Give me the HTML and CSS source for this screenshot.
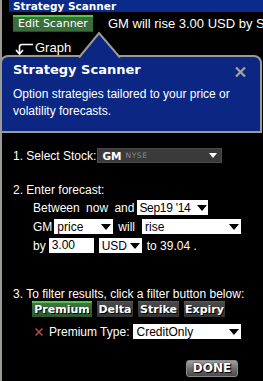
FILE: index.html
```html
<!DOCTYPE html>
<html>
<head>
<meta charset="utf-8">
<title>Strategy Scanner</title>
<link rel="stylesheet" href="styles.css">
</head>
<body>
<div class="app">
  <div class="titlebar">Strategy Scanner</div>
  <div class="toolbar">
    <div class="btn-edit">Edit Scanner</div>
    <div class="summary">GM will rise 3.00 USD by Sep19 '14</div>
  </div>
  <div class="graph">
    <svg class="graph-icon" width="19" height="12" viewBox="0 0 19 12"><path d="M19 1.5 H8 Q5.5 1.5 5.5 4 V10" fill="none" stroke="#fff" stroke-width="1.6"/><path d="M2 7 L5.5 11 L9 7" fill="none" stroke="#fff" stroke-width="1.6"/></svg>
    <span>Graph</span>
  </div>

  <div class="popup">
    <div class="pop-head">
      <div class="pop-title-row">
        <span class="pop-title">Strategy Scanner</span>
        <svg class="close" width="11" height="10" viewBox="0 0 11 10"><path d="M1 0.5 L10 9.5 M10 0.5 L1 9.5" stroke="#a6a595" stroke-width="2.2"/></svg>
      </div>
      <p class="pop-desc">Option strategies tailored to your price or volatility forecasts.</p>
    </div>
    <div class="pop-body">
      <div class="row row-stock">
        <span>1. Select Stock:</span>
        <div class="stock-select"><b>GM</b><span class="exch">NYSE</span><i class="arrow arrow-white"></i></div>
      </div>
      <div class="step">2. Enter forecast:</div>
      <div class="row indent row-between">
        <span class="wide">Between now and</span>
        <div class="sel sel-date"><span class="tight">Sep19 '14</span><i class="arrow"></i></div>
      </div>
      <div class="row indent row-gm">
        <span>GM</span>
        <div class="sel sel-price"><span>price</span><i class="arrow"></i></div>
        <span class="will">will</span>
        <div class="sel sel-rise"><span>rise</span><i class="arrow"></i></div>
      </div>
      <div class="row indent row-by">
        <span>by</span>
        <div class="input-box">3.00</div>
        <div class="sel sel-usd"><span>USD</span><i class="arrow"></i></div>
        <span class="target">to 39.04 .</span>
      </div>
      <div class="step step3">3. To filter results, click a filter button below:</div>
      <div class="filters">
        <div class="fbtn fbtn-on w-prem">Premium</div>
        <div class="fbtn w-delta">Delta</div>
        <div class="fbtn w-strike">Strike</div>
        <div class="fbtn w-exp">Expiry</div>
      </div>
      <div class="row row-ptype">
        <svg class="remove" width="8" height="8" viewBox="0 0 8 8"><path d="M0.5 0.5 L7.5 7.5 M7.5 0.5 L0.5 7.5" stroke="#b84a4a" stroke-width="1.5"/></svg>
        <span class="ptype-label">Premium Type:</span>
        <div class="sel sel-credit"><span>CreditOnly</span><i class="arrow"></i></div>
      </div>
      <div class="done-row"><div class="btn-done">DONE</div></div>
    </div>
  </div>

  <svg class="pointer" width="48" height="28" viewBox="0 0 48 28">
    <polygon points="3,28 23,2 44,28" fill="#0b2783"/>
    <polyline points="3,26.5 23,2 44,26.5" fill="none" stroke="#9b9b93" stroke-width="2"/>
  </svg>
</div>
</body>
</html>
```

FILE: styles.css
```css
body {
  margin: 0;
  background: #000;
}

.app {
  position: relative;
  width: 263px;
  height: 381px;
  overflow: hidden;
  background: #000;
  box-shadow: inset 2px 0 0 #9b9b93;
  font-family: "Liberation Sans", Arial, sans-serif;
  font-size: 12px;
  color: #fff;
}

.titlebar {
  margin-left: 9px;
  height: 12px;
  padding-left: 4px;
  background: #0a2a8c;
  font-family: "DejaVu Sans", Verdana, sans-serif;
  font-weight: bold;
  font-size: 10.5px;
  line-height: 12px;
  white-space: nowrap;
}

.toolbar {
  display: flex;
  align-items: center;
  margin: 3px 0 0 13px;
  height: 17px;
  white-space: nowrap;
}

.btn-edit {
  box-sizing: border-box;
  flex: none;
  width: 80px;
  height: 17px;
  border-top: 2px solid #55c455;
  background: #3b6d3b;
  box-shadow: inset 0 -1px 0 #2a4a2a;
  font-family: "DejaVu Sans", Verdana, sans-serif;
  font-size: 11px;
  line-height: 14px;
  text-align: center;
}

.summary {
  margin-left: 15px;
  font-size: 13px;
}

.graph {
  display: flex;
  align-items: center;
  margin: 8px 0 0 14px;
  height: 15px;
  font-size: 13px;
}

.graph-icon {
  margin-right: 2px;
  margin-top: 2px;
}

.popup {
  position: absolute;
  left: 0;
  top: 55px;
  width: 262px;
  bottom: 0;
  box-sizing: border-box;
  border: 2px solid #9b9b93;
  border-right-color: transparent;
  border-bottom: none;
  border-radius: 8px 8px 0 0;
  background: linear-gradient(to bottom, #9b9b93 0, #9b9b93 76px, #000 76px);
  background-clip: border-box;
  overflow: hidden;
}

.pop-head {
  height: 74px;
  box-sizing: border-box;
  padding: 5px 0 0 11px;
  background: #0b2783;
}

.pop-title-row {
  display: flex;
  align-items: center;
  justify-content: space-between;
  padding-right: 14px;
  height: 16px;
}

.pop-title {
  font-family: "DejaVu Sans", Verdana, sans-serif;
  font-weight: bold;
  font-size: 13px;
  line-height: 16px;
}

.close {
  margin-top: 3px;
}

.pop-desc {
  margin: 8px 0 0 0;
  font-size: 12px;
  line-height: 17px;
  width: 230px;
}

.pop-body {
  padding-left: 11px;
  background: #000;
  height: calc(100% - 74px);
}

.row {
  display: flex;
  align-items: center;
  height: 15px;
  white-space: nowrap;
}

.indent {
  padding-left: 20px;
}

.row-stock {
  margin-top: 17px;
}

.stock-select {
  display: flex;
  align-items: center;
  box-sizing: border-box;
  width: 125px;
  height: 15px;
  margin-left: 1px;
  padding-left: 4px;
  background: #3a3a3a;
  border: 1px solid #4a4a4a;
}

.stock-select b {
  font-family: "DejaVu Sans", Verdana, sans-serif;
  font-size: 10.5px;
}

.exch {
  margin-left: 4px;
  font-family: "DejaVu Sans", Verdana, sans-serif;
  font-size: 7.5px;
  letter-spacing: 0.6px;
  color: #8a8a8a;
}

.step {
  margin-top: 19px;
  line-height: 16px;
}

.row-between {
  margin-top: 2px;
}

.wide {
  word-spacing: 3px;
}

.tight {
  letter-spacing: -0.3px;
}

.row-gm,
.row-by {
  margin-top: 4px;
}

.sel {
  display: flex;
  align-items: center;
  justify-content: space-between;
  box-sizing: border-box;
  height: 15px;
  padding: 0 2px 0 3px;
  background: #fff;
  color: #000;
}

.arrow {
  display: block;
  flex: none;
  width: 0;
  height: 0;
  border-left: 5px solid transparent;
  border-right: 5px solid transparent;
  border-top: 6px solid #000;
}

.arrow-white {
  margin-left: auto;
  margin-right: 4px;
  border-left-width: 4px;
  border-right-width: 4px;
  border-top: 5px solid #fff;
}

.sel-date { width: 71px; margin-left: 3px; padding-left: 2px; padding-right: 1px; }
.sel-price { width: 59px; margin-left: 2px; }
.will { margin-left: 5px; }
.sel-rise { width: 99px; margin-left: 7px; }
.sel-usd { width: 43px; margin-left: 5px; }
.target { margin-left: 5px; }

.input-box {
  box-sizing: border-box;
  width: 45px;
  height: 15px;
  margin-left: 3px;
  padding-left: 3px;
  background: #fff;
  color: #000;
  line-height: 15px;
}

.step3 {
  margin-top: 34px;
  line-height: 14px;
}

.filters {
  display: flex;
  gap: 5px;
  padding-left: 19px;
  height: 16px;
}

.fbtn {
  box-sizing: border-box;
  height: 16px;
  border-top: 1px solid #5a5a5a;
  background: linear-gradient(to bottom, #4a4a4a, #333);
  font-family: "DejaVu Sans", Verdana, sans-serif;
  font-weight: bold;
  font-size: 11px;
  line-height: 15px;
  text-align: center;
  text-shadow: 1px 1px 0 #000;
}

.fbtn-on {
  border-top: 2px solid #4fc24f;
  background: linear-gradient(to bottom, #3f743f, #2c572c);
  line-height: 14px;
}

.w-prem { width: 60px; }
.w-delta { width: 36px; }
.w-strike { width: 41px; }
.w-exp { width: 41px; }

.row-ptype {
  margin-top: 7px;
  padding-left: 22px;
}

.ptype-label {
  margin-left: 6px;
}

.sel-credit {
  width: 108px;
  margin-left: 4px;
}

.done-row {
  display: flex;
  justify-content: flex-end;
  margin-top: 21px;
  padding-right: 22px;
}

.btn-done {
  box-sizing: border-box;
  width: 52px;
  height: 17px;
  border: 1px solid #8a8a8a;
  border-radius: 3px;
  background: linear-gradient(to bottom, #a0a0a0, #6a6a6a 55%, #4a4a4a);
  font-family: "DejaVu Sans", Verdana, sans-serif;
  font-weight: bold;
  font-size: 12px;
  line-height: 15px;
  text-align: center;
  text-shadow: 0 0 2px #000, 1px 1px 0 #000;
}

.pointer {
  position: absolute;
  left: 76px;
  top: 31px;
}
```
